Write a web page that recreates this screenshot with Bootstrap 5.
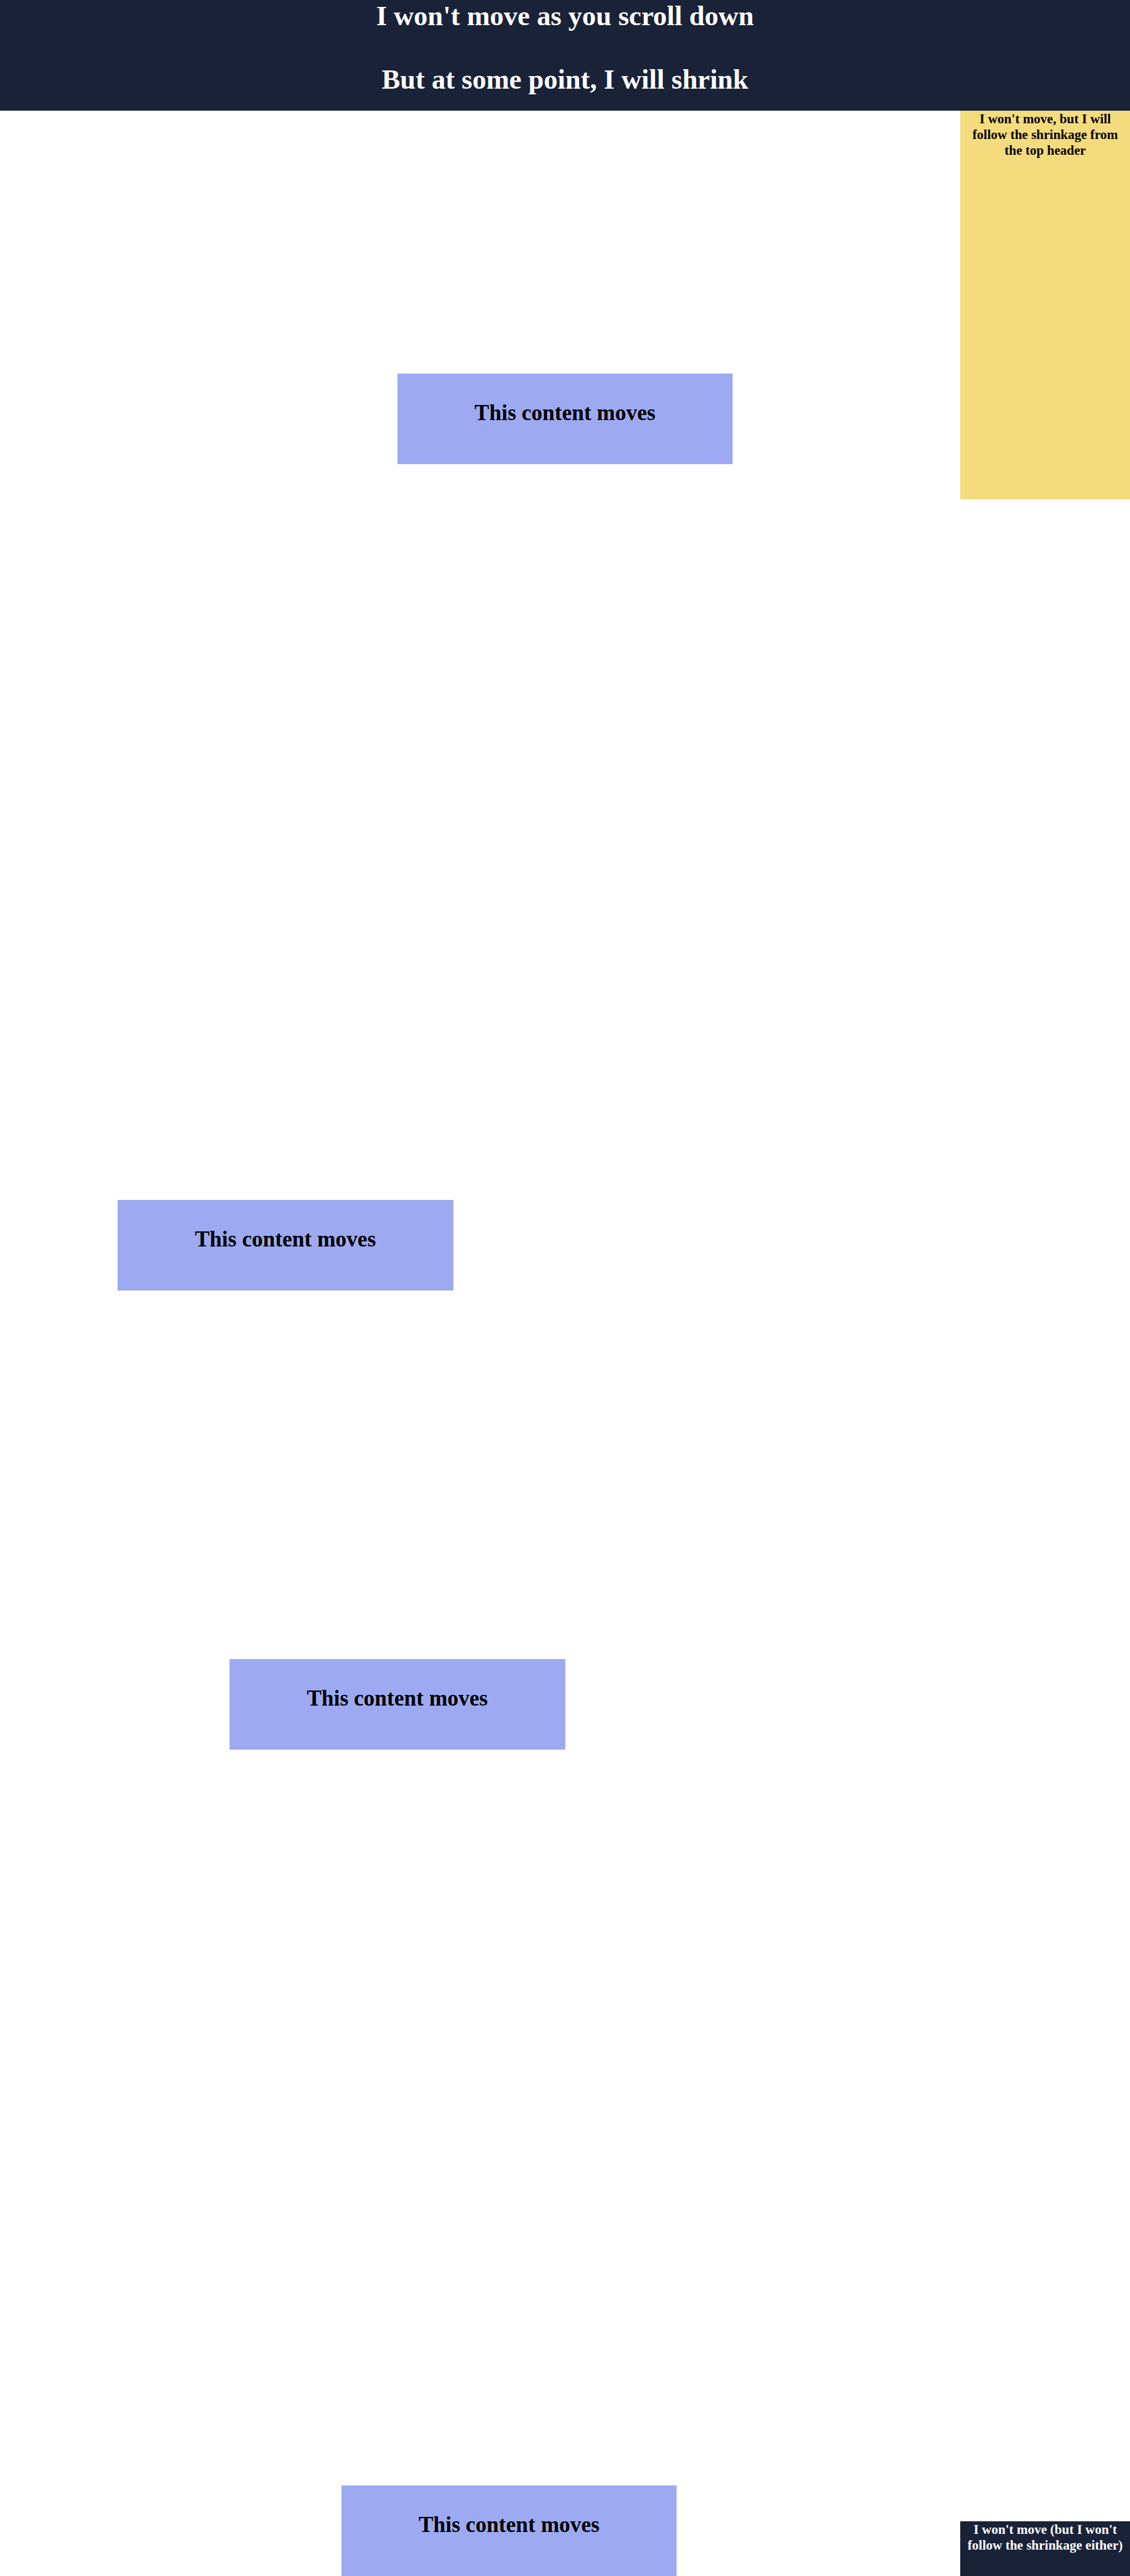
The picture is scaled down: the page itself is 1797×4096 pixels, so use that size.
<!DOCTYPE html>
<html lang="en">
<head>
<meta charset="utf-8">
<meta name="viewport" content="width=device-width, initial-scale=1">
<title>Shrinking header</title>
<link href="https://cdn.jsdelivr.net/npm/bootstrap@5.3.0/dist/css/bootstrap.min.css" rel="stylesheet">
<style>
  body { font-family: "Liberation Serif", "Times New Roman", serif; }
  h1, h2, h3 { font-weight: 700; margin: 0; }
  .top-header { background: #1a2238; padding: 1px 0 24px; }
  .top-header h1 { font-size: 44px; line-height: 50px; }
  .top-header h1 + h1 { margin-top: 51px; }
  .content-area { width: 85%; padding-top: 418px; }
  .side-area { width: 15%; }
  .side-area aside { padding-top: 1px; }
  .side-area h3 { font-size: 21px; line-height: 25px; }
  .side-top { background: #f4db7d; min-height: 618px; }
  .side-bottom { background: #1a2238; min-height: 87px; }
  .moving-box { background: #9daaf2; width: 34.93%; padding: 43px 0 61px; }
  .moving-box h2 { font-size: 35px; line-height: 40px; }
  .gap-long { margin-top: 1170px; }
  .gap-short { margin-top: 586px; }
  .shift-1 { margin-left: 12.25%; }
  .shift-2 { margin-left: 23.9%; }
  .shift-3 { margin-left: 35.54%; }
  .shift-4 { margin-left: 41.36%; }
</style>
</head>
<body class="bg-white text-black text-center">
<header class="top-header text-white">
  <h1>I won't move as you scroll down</h1>
  <h1>But at some point, I will shrink</h1>
</header>
<div class="d-flex">
  <main class="content-area">
    <section class="moving-box shift-4"><h2>This content moves</h2></section>
    <section class="moving-box gap-long shift-1"><h2>This content moves</h2></section>
    <section class="moving-box gap-short shift-2"><h2>This content moves</h2></section>
    <section class="moving-box gap-long shift-3"><h2>This content moves</h2></section>
  </main>
  <div class="side-area d-flex flex-column justify-content-between">
    <aside class="side-top px-3"><h3>I won't move, but I will follow the shrinkage from the top header</h3></aside>
    <aside class="side-bottom text-white px-1"><h3>I won't move (but I won't follow the shrinkage either)</h3></aside>
  </div>
</div>
<script src="https://cdn.jsdelivr.net/npm/bootstrap@5.3.0/dist/js/bootstrap.bundle.min.js"></script>
</body>
</html>
